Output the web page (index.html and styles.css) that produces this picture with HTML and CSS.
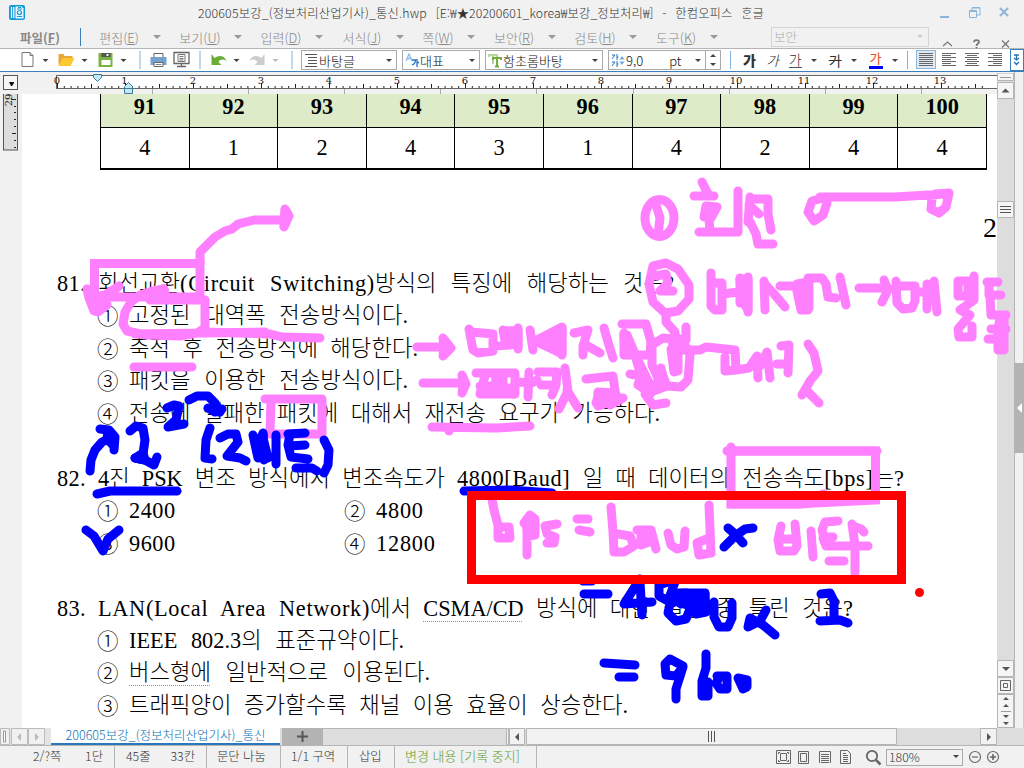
FILE: index.html
```html
<!DOCTYPE html>
<html lang="ko">
<head>
<meta charset="utf-8">
<title>한컴오피스 한글</title>
<link rel="stylesheet" href="styles.css">
</head>
<body>
<div class="app">
  <header class="titlebar">
    <svg class="logo" width="18" height="18" viewBox="0 0 18 18"><rect x="1" y="1" width="16" height="15" rx="2" fill="#149bd7"/><path d="M3.500 3v11M5.800 3v11" stroke="#fff" stroke-width="1.200"/><path d="M7.500 2.500h6l2 2v10h-8z" fill="#e9f6fc"/><path d="M9 5h5M10 3.500h3" stroke="#149bd7"/><circle cx="11.500" cy="8.500" r="2" fill="none" stroke="#149bd7" stroke-width="1.200"/><path d="M9 12.500h5" stroke="#149bd7"/></svg>
    <div class="title"><span class="fname">200605보강_(정보처리산업기사)_통신.hwp</span> <span>[E:₩★20200601_korea₩보강_정보처리₩]</span> <span>-</span> <span>한컴오피스</span> <span>ᄒᆞᆫ글</span></div>
    <svg class="winbtns" width="72" height="14" viewBox="0 0 72 14" fill="none" stroke="#8db4d9"><path d="M0 11h9" stroke-width="2"/><path d="M32 4V1.500h8V9h-3M29.500 4.500h7v7h-7zM29 5.500h8M32 2h8"/><path d="M60 2l8 8M68 2l-8 8" stroke-width="2"/></svg>
  </header>
  <nav class="menubar">
    <span class="mi file">파일(<u>F</u>)</span><i class="bluesep"></i>
    <span class="mi">편집(<u>E</u>)</span><i class="dn"></i>
    <span class="mi">보기(<u>U</u>)</span><i class="dn"></i>
    <span class="mi">입력(<u>D</u>)</span><i class="dn"></i>
    <span class="mi">서식(<u>J</u>)</span><i class="dn"></i>
    <span class="mi narrow">쪽(<u>W</u>)</span><i class="dn"></i>
    <span class="mi">보안(<u>R</u>)</span><i class="dn"></i>
    <span class="mi">검토(<u>H</u>)</span><i class="dn"></i>
    <span class="mi">도구(<u>K</u>)</span><i class="dn last"></i>
    <div class="search"><span>보안</span><i class="dn pale"></i></div>
    <svg class="menuend" width="70" height="12" viewBox="0 0 70 12" fill="none" stroke="#777" stroke-width="1.300"><path d="M1 8l4.500-4 4.500 4"/><path d="M32 4.300C32 1.500 37 1.500 37 4c0 1.600-2.500 1.500-2.500 4M34.500 9v1.500" stroke-width="1.800"/><path d="M60 2.500l7 7M67 2.500l-7 7"/></svg>
  </nav>
  <div class="toolbar">
    <svg class="icons" width="300" height="22" viewBox="0 0 300 22">
      <path d="M21.500 3.500h8l3 3v11h-11zM29.500 3.500v3h3" fill="#fff" stroke="#777"/>
      <path d="M58 5h5l1 2h8v4h-9l-5 5z" fill="#e9a63b"/><path d="M62 9h12l-4 8H58z" fill="#fdc82f"/>
      <path d="M98 4h14v14H98z" fill="#7ab342"/><path d="M101 4h9v4h-9z" fill="#555"/><path d="M106 5h2v2h-2z" fill="#fff"/><path d="M101 11h9v5h-9z" fill="#fff"/>
      <path d="M153.500 4.500h9v4h-9z" fill="#fff" stroke="#666"/><path d="M150 8h16v8h-16z" fill="#75a1cf"/><path d="M153.500 13.500h9v4h-9z" fill="#fff" stroke="#666"/><path d="M155 15.500h6" stroke="#888"/>
      <path d="M173.500 3.500h15v11h-15zM176.500 17.500h9M181 15v3" fill="none" stroke="#666" stroke-width="1.300"/><path d="M177.500 5.500h7v7h-7zM179 7.500h4M179 9.500h4M179 11h4" fill="#fff" stroke="#777"/>
      <path d="M211 5v11h10l-3-3c2-3 5-3 8-1-2-6-8-6-12-3z" fill="#6cad35"/>
      <path d="M264 5v11h-10l3-3c-2-3-5-3-8-1 2-6 8-6 12-3z" fill="#ccc"/>
      <path d="M42 10h6l-3 3zM81 10h6l-3 3zM120 10h6l-3 3zM233 10h6l-3 3z" fill="#444"/><path d="M272 10h6l-3 3z" fill="#bbb"/>
      <path d="M139.500 2v18M199.500 2v18M291.500 2v18" stroke="#82b2de"/>
    </svg>
    <div class="combo c1"><svg width="14" height="15" viewBox="0 0 14 15" stroke="#555"><path d="M1 1.500h12M4 4.500h9M4 7.500h9M4 10.500h9M1 13.500h12"/></svg><span>바탕글</span><i class="dn dark"></i></div>
    <div class="combo c2"><svg width="14" height="15" viewBox="0 0 14 15" fill="none"><path d="M1 8l3-7 3 7M2 5.500h4" stroke="#8eb8e8" stroke-width="1.300"/><path d="M7 7h3.500c0 3-1 4-3.500 5M12 6v8M12 9.500h2" stroke="#2671c5" stroke-width="1.300"/></svg><span>대표</span><i class="dn dark"></i></div>
    <div class="combo c3"><svg width="14" height="15" viewBox="0 0 14 15" fill="none"><path d="M1 4V2h8v2M5 2v9" stroke="#b9d79d" stroke-width="2"/><path d="M5 7V5h8v2M9 5v8M7 13.500h4" stroke="#73ac3b" stroke-width="2"/></svg><span>함초롬바탕</span><i class="dn dark"></i></div>
    <div class="combo c4"><svg width="14" height="15" viewBox="0 0 14 15" fill="none" stroke="#2671c5"><path d="M1 2h3L1 6M6 1v6M6 4h1.500M1 9h3l-3 4M6 8v6M6 11h1.500"/><path d="M8.500 6.500L11 3l2.500 3.500zM8.500 8.500L11 12l2.500-3.500z" fill="#6ea6df" stroke="none"/></svg><span class="size">9,0</span><span class="pt">pt</span><i class="dn dark"></i></div>
    <div class="spin"><i class="up"></i><i class="dn dark"></i></div>
    <i class="bluesep"></i>
    <div class="fmt"><b>가</b><em>가</em><span class="ul">가</span><i class="dn dark"></i><s>가</s><i class="dn dark"></i><span class="fc">가</span><i class="dn dark"></i></div>
    <i class="bluesep"></i>
    <svg class="align" width="88" height="22" viewBox="0 0 88 22"><rect x=".5" y="1.500" width="19" height="18" fill="#dfeaf5" stroke="#8db4d9"/><path d="M3 4.500h14M3 6.500h14M3 8.500h14M3 10.500h14M3 12.500h14M3 14.500h14M3 16.500h14M26 4.500h14M26 6.500h9M26 8.500h14M26 10.500h9M26 12.500h14M26 14.500h9M26 16.500h14M49 4.500h14M51 6.500h10M49 8.500h14M51 10.500h10M49 12.500h14M51 14.500h10M49 16.500h14M72 4.500h14M77 6.500h9M72 8.500h14M77 10.500h9M72 12.500h14M77 14.500h9M72 16.500h14" stroke="#666"/></svg>
    <div class="more"><svg width="8" height="14" viewBox="0 0 8 14" fill="none" stroke="#2470b6" stroke-width="1.300"><path d="M1 2h5M3.500 2v4M1 5l2.500 2L6 5M1 9l2.500 2.500L6 9"/></svg></div>
  </div>
  <div class="workspace">
    <div class="main">
      <svg class="hruler" width="997" height="22" viewBox="0 0 997 22">
        <defs><pattern id="ticks" x="57" y="0" width="68" height="22" patternUnits="userSpaceOnUse"><path d="M.5 11v5M7.300 14v2M14.100 14v2M20.900 14v2M27.700 14v2M34.500 12v4M41.300 14v2M48.100 14v2M54.900 14v2M61.700 14v2" stroke="#222"/></pattern></defs>
        <rect x="56.500" y="3.500" width="950" height="13" fill="#fff" stroke="#666"/>
        <rect x="57" y="4" width="930" height="13" fill="url(#ticks)"/>
        <path d="M152.500 17v5M248.500 17v5M344.500 17v5M440.500 17v5M536.500 17v5M633.500 17v5M729.500 17v5M825.500 17v5M921.500 17v5" stroke="#aaa"/>
        <g class="rnum"><text x="57" y="12">0</text><text x="124.500" y="12">1</text><text x="193" y="12">2</text><text x="261" y="12">3</text><text x="329" y="12">4</text><text x="397" y="12">5</text><text x="465" y="12">6</text><text x="533" y="12">7</text><text x="601" y="12">8</text><text x="669" y="12">9</text><text x="736" y="12">10</text><text x="804" y="12">11</text><text x="872" y="12">12</text><text x="940" y="12">13</text></g>
        <path d="M93.500 2.500h8v3l-4 4-4-4z" fill="#bfeaf5" stroke="#3b7c99"/><path d="M124.500 21.500v-7l4-4 4 4v7zM124 16.500h9" fill="#bfeaf5" stroke="#3b7c99"/>
        <rect x="3.500" y="3.500" width="14" height="14" fill="#f7f7f7" stroke="#555"/><path d="M9 10h5v1l-2 3h-1z" fill="#111"/>
      </svg>
      <div class="docrow">
        <div class="vruler"><svg width="22" height="62" viewBox="0 0 22 62"><rect x="3.500" y="-1" width="14" height="57" fill="#ddd" stroke="#555"/><path d="M11 5.500h5M14 12.500h2M14 18.500h2M14 25.500h2M14 32.500h2M12 39.500h4M14 46.500h2M14 53.500h2" stroke="#222"/><text class="vnum" transform="translate(12 6) rotate(-90)">29</text></svg></div>
        <div class="page">
          <table class="answers">
            <tr><th>91</th><th>92</th><th>93</th><th>94</th><th>95</th><th>96</th><th>97</th><th>98</th><th>99</th><th>100</th></tr>
            <tr><td>4</td><td>1</td><td>2</td><td>4</td><td>3</td><td>1</td><td>4</td><td>2</td><td>4</td><td>4</td></tr>
          </table>
          <div class="pageno">2</div>
          <section class="q">
            <div class="line"><span class="n">81.</span><p class="w574">회선교환<span class="la">(Circuit Switching)</span>방식의 특징에 해당하는 것은?</p></div>
            <div class="line opt"><span class="o">①</span><p class="w279">고정된 대역폭 전송방식이다.</p></div>
            <div class="line opt"><span class="o">②</span><p class="w289">축적 후 전송방식에 해당한다.</p></div>
            <div class="line opt"><span class="o">③</span><p class="w279">패킷을 이용한 전송방식이다.</p></div>
            <div class="line opt"><span class="o">④</span><p class="w531">전송에 실패한 패킷에 대해서 재전송 요구가 가능하다.</p></div>
          </section>
          <section class="q">
            <div class="line"><span class="n">82.</span><p class="w806">4진 <span class="sp">PSK</span> 변조 방식에서 변조속도가 <span class="la">4800[Baud]</span> 일 때 데이터의 전송속도<span class="la">[bps]</span>는?</p></div>
            <div class="line opt"><span class="o">①</span><p class="w216">2400</p><span class="o">②</span><p class="num">4800</p></div>
            <div class="line opt"><span class="o">③</span><p class="w216">9600</p><span class="o">④</span><p class="num">12800</p></div>
          </section>
          <section class="q">
            <div class="line"><span class="n">83.</span><p class="w755"><span class="la">LAN(Local Area Network)</span>에서 <span class="sp">CSMA/CD</span> 방식에 대한 설명 중 틀린 것은?</p></div>
            <div class="line opt"><span class="o">①</span><p class="w275">IEEE 802.3의 표준규약이다.</p></div>
            <div class="line opt"><span class="o">②</span><p class="w301"><span class="sp">버스형에</span> 일반적으로 이용된다.</p></div>
            <div class="line opt"><span class="o">③</span><p class="w499">트래픽양이 증가할수록 채널 이용 효율이 상승한다.</p></div>
          </section>
        </div>
      </div>
    </div>
    <div class="vscroll">
      <svg width="17" height="655" viewBox="0 0 17 655">
        <rect width="17" height="655" fill="#ddd"/>
        <g fill="#f5f5f5" stroke="#b5b5b5"><path d="M.5 0h16v7.500H.5zM.5 9.500h16v16H.5zM.5 128.500h16v16H.5zM.5 587.500h16v16H.5zM.5 604.500h16v16H.5zM.5 621.500h16v33H.5z"/></g>
        <path d="M3 4.500h11M4 638.500h10" stroke="#999"/><path d="M3 133.500h11M3 136.500h11M3 139.500h11" stroke="#555"/>
        <path d="M4.500 19.500h8l-4-4zM5 594h8l-4 4zM6 627h6l-3-3zM6 634h6l-3-3zM6 642h6l-3 3zM6 649h6l-3 3z" fill="#555"/>
        <path d="M3.500 607.500h10v10h-10zM6.500 610.500h4v4h-4z" fill="none" stroke="#666"/>
      </svg>
    </div>
    <div class="sidepane"><div class="handle"><svg width="7" height="10" viewBox="0 0 7 10"><path d="M6 0v10L1 5z" fill="#fff"/></svg></div></div>
  </div>
  <div class="tabbar">
    <svg class="tabnav" width="51" height="17" viewBox="0 0 51 17"><rect width="51" height="17" fill="#e4e4e4"/><path d="M.5.500h9v16H.5zM11.500.500h16v16h-16zM28.500.500h16v16h-16z" fill="#f1f1f1" stroke="#bbb"/><path d="M3.500 3h2v11h-2z" fill="#fff" stroke="#999"/><path d="M21 5v8l-4-4zM35 5v8l4-4z" fill="#bbb"/></svg>
    <div class="tab"><span>200605보강_(정보처리산업기사)_통신</span></div>
    <div class="addtab"><svg width="11" height="11" viewBox="0 0 11 11"><path d="M5.500 0v11M0 5.500h11" stroke="#555" stroke-width="2"/></svg></div>
    <div class="trough"></div>
    <svg class="hscroll" width="509" height="17" viewBox="0 0 509 17"><rect width="509" height="17" fill="#ddd"/><path d="M.5.500h2v16h-2zM3.500.500h15v16h-15zM20.500.500h370v16h-370zM474.500.500h16v16h-16z" fill="#f2f2f2" stroke="#b5b5b5"/><path d="M13 5v8l-4-4zM481 5v8l4-4z" fill="#555"/><path d="M202.500 3v11M205.500 3v11M208.500 3v11" stroke="#555"/></svg>
  </div>
  <footer class="status">
    <div class="st s1"><span>2/?쪽</span><span>1단</span></div>
    <div class="st s2"><span>45줄</span><span>33칸</span></div>
    <div class="st s3"><span>문단 나눔</span></div>
    <div class="st s4"><span>1/1 구역</span></div>
    <div class="st s5"><span>삽입</span></div>
    <div class="st s6"><span>변경 내용 [기록 중지]</span></div>
    <svg class="views" width="108" height="20" viewBox="0 0 108 20" fill="none" stroke="#666"><path d="M.5 3.500h14v13H.5zM4.500 6.500h6v7h-6z"/><path d="M2.500 7V5.500H4M11 5.500h1.500V7M2.500 13v1.500H4M11 14.500h1.500V13"/><path d="M22.500 4.500h10v12h-10zM24.500 6.500h6v8h-6z"/><path d="M43.500 16V4.500h11V16M45 7.500h8M45 9.500h8M45 11.500h8M45 13.500h8M45 15.500h8"/><path d="M64.500 3.500h7l3 3v10h-10zM67 6.500h3M67 8.500h5M67 10.500h5M67 12.500h5M67 14.500h5"/><circle cx="96" cy="9" r="5.200" stroke-width="1.800"/><path d="M100 13l4.500 4.500" stroke-width="2.500"/></svg>
    <div class="zoom"><span>180%</span><i class="dn dark"></i></div>
    <svg class="pm" width="34" height="14" viewBox="0 0 34 14" fill="none" stroke="#666" stroke-width="1.200"><circle cx="8" cy="7" r="5.500"/><path d="M5 7h6"/><circle cx="26" cy="7" r="5.500"/><path d="M23 7h6M26 4v6" stroke-width="1.600"/></svg>
  </footer>

  <svg class="ink" width="1024" height="768" viewBox="0 0 1024 768">
    <g class="pink">
      <path class="square" d="M94.500 296V263.500H200V297H94.500"/>
      <path d="M200 264V252L205 247 215 237 225 231 232 229 238 224 246 222 254 220H285M285 209L289 216 284 227"/>
      <path class="fill" d="M87 289L89 298 94 311 98 312 107 305 104 299 119 286 105 295 95 297 87 289"/>
      <path d="M164 289L150 292 140 295 131 302 125 312 123 324 127 331 145 335 180 336 197 333 205 328V300H150M204 332L270 334 282 337 320 338M135 334L265 332"/>
      <path class="fill" d="M140 296L150 292 164 289 166 298z"/>
      <path d="M134 367H192M265 399H322V434H270L271 400M432 427L496 428 530 426M449 431V429"/>
      <path d="M417 347H448M423 383H465"/>
      <path class="fill" d="M443 338L451 348 443 356 444 347zM462 375L466 384 462 393 463 384zM285 210L288 217 284 226 284 219z"/>
      <path d="M469 329L473 350 478 353 493 351 493 334 471 332M494 346L510 345M503 330L505 341M518 328V349M504 331H516"/>
      <path class="fill" d="M504 331H518V346L506 342z"/>
      <path d="M530 330L533 350M535 341L562 327V355M537 342L557 351M552 338V346M574 333L588 330 583 346V355M584 344L600 353M604 328L608 342 613 358"/>
      <path class="fill" d="M562 328V354L538 342z"/>
      <path d="M622 324H646L651 342M624 333V355H650L651 340M627 335L635 354 643 371 651 387M630 374L641 376 638 385 651 393"/>
      <path class="fill" d="M635 355L650 385 651 393 640 386 641 376zM624 334L632 350 625 353z"/>
      <path d="M666 314V322L675 332 674 345 677 352M686 327V340L663 338 652 345 652 365 660 382M686 347L690 355 688 380 681 387 667 386 645 394 653 405 666 403M671 349L674 372 678 371V354M661 368L663 383 650 391"/>
      <path class="fill" d="M671 338H678V352L675 351zM661 370L666 384 656 387z"/>
      <path d="M675 350H700L706 347 735 350 736 370 725 371V357M736 370L749 368 757 356 758 378M760 366L767 352 770 378M781 346L789 345 788 373M777 364H788"/>
      <path d="M808 344L814 353 818 371 810 381 802 395M807 391L819 403"/>
      <path d="M476 373H515V394H480L485 376M496 376V393M517 382L532 383 537 380M529 372L528 397M538 372H557L556 385 552 395M541 385H554M565 368L568 391 559 409M567 390L578 408"/>
      <path class="fill" d="M496 376H503V392H484L480 386 496 386zM500 388H514V394z"/>
      <path d="M586 379L613 376 616 398 596 403 599 393 612 398 610 405 623 398"/>
      <path class="fill" d="M598 392L614 393 620 399 598 406z"/>
      <ellipse cx="659.500" cy="218" rx="14.500" ry="18.500"/>
      <path d="M656 205L660 218 658 235M702 182L706 190 709 195M694 196H714M717 207L706 206 704 217 711 218 717 207M709 220L710 230M699 232H738V191"/>
      <path d="M750 197L748 222M749 205L759 214M755 199H768L768 214 771 230M750 222L756 234 758 244H773"/>
      <path d="M823 198L812 201 808 212 814 221 823 215 827 203M820 197H895L945 194M932 198L931 209 939 213 946 207 949 193 935 194"/>
      <path d="M666 263L653 266 649 284 653 302 665 313 678 311 689 299 689 285 678 269 666 263M656 276L666 274 668 283 660 291H673"/>
      <path d="M711 273V306L715 310H722V283H711M723 294L738 292M740 278V303M748 277V312"/>
      <path d="M764 281L765 310M764 283L775 295 785 307M780 286H796L801 310H808V278H822L826 284 828 297 836 298M840 277L846 305"/>
      <path d="M859 288H888M884 280L888 290 882 302M896 281L897 303 903 309 912 308 915 301V286H896M915 292H927M927 284V309M934 281L937 312"/>
      <path class="fill" d="M740 279H748V310L742 300zM797 284L809 282V308H801z"/>
      <path d="M958 281V296L968 296V281L958 281M974 276V300L960 310 970 315 958 329 959 337H972V326"/>
      <path d="M987 282H998M989 283V295H1001M990 295L991 315H1006M991 329H1006M988 339H1003"/><path class="fill" d="M1000 318H1004V350H998V330z"/>
      <path class="square" d="M731 447V504H800L815 503 875.500 500V451H731"/>
      <path d="M727 451H877M823 494H824M731 504L800 504"/>
      <path d="M492 499L494 510 498 525 498 538H510L509 527H500M524 523L530 515 535 519 535 535 528 536 526 524M527 530V555M557 524L545 526 547 534 555 537 554 543H547"/>
      <path d="M577 519H588M579 530L590 532M611 507L613 532 614 552H624L634 546 630 536 618 534M637 530H651L656 549M641 533V545L649 542 650 534M668 533L671 545 677 549 684 547 685 531M709 505L711 553 699 555 697 543 709 538"/>
      <path d="M781 526L778 540 780 551H794L797 546 795 524M781 539H796M811 531L813 557M838 521L825 522 822 530 824 537H833M823 538L826 546H868M829 561H844M852 524L855 545V573M853 526L861 529 864 532"/>
    </g>
    <g class="blue">
      <path d="M90 471L91 460 95 450 102 442 113 437M100 429L109 430 115 437 114 450M130 431L136 426 143 428 145 440 143 454M135 458L145 460 154 465 157 457"/>
      <path class="fill" d="M108 431L114 438 113 445 107 439zM135 458L143 453 145 460z"/>
      <path d="M167 408L174 405 179 406 176 420 168 427 184 424M189 400L197 396H208L215 403 220 412"/>
      <path class="fill" d="M208 408L215 412 222 409 219 412z"/>
      <path d="M210 428L206 440 205 458 212 459M220 438L228 434H236L238 442 227 456 240 458 246 461M253 435L258 458M263 433L264 460M257 445H263M263 438L268 458M276 435V464"/>
      <path class="fill" d="M263 434L265 459 254 437 256 446z"/>
      <path d="M288 434L305 433M290 434L288 445 291 457 308 459M289 446L305 445M296 468H312L317 471M324 440L329 450 328 465 324 473"/>
      <path d="M97 494L110 491H177M86 530L94 536 103 551 108 539 119 530M464 491L510 490 552 493"/>
      <path d="M728 528L735 534 743 543M724 547L735 536 745 529 753 528"/>
      <path d="M583 581H592M584 594H608M640 579L624 604 652 602M640 582L642 615M671 581L659 585 659 596 668 601 675 582"/>
      <path d="M686 593L672 594 681 604 691 598 705 594M690 609L686 619 676 621 668 613 670 604 681 598M703 594L695 601 697 613 705 610 703 594M714 602L714 617 719 627 728 627 732 618V603"/>
      <path class="fill" d="M678 593H705L706 612 696 614 690 606 678 602z"/>
      <path d="M766 610L760 621 748 627 750 618 763 625 775 635M821 594L830 593 834 601V620M820 621L840 620 848 623"/>
      <path d="M604 663L635 665M619 677H634M683 666L670 659 665 664 666 675 676 676 683 667 676 689V699M706 654V668L702 681V696H708V682L704 687M717 676H727V689H720L716 683 719 678M738 678L747 680V687L743 689 738 678"/>
    </g>
    <rect class="frame" x="471.500" y="495.500" width="430" height="84"/>
    <circle cx="919.500" cy="592.500" r="4.500" fill="#f00"/>
  </svg>
</div>
</body>
</html>
```
FILE: styles.css
```css
* { box-sizing: border-box; }
body { margin: 0; background: #f1f1f1; }
.app {
  position: relative;
  width: 1024px;
  height: 768px;
  overflow: hidden;
  display: flex;
  flex-direction: column;
  font: 300 12.500px "Noto Sans CJK KR", sans-serif;
  color: #333;
  white-space: nowrap;
}
svg { display: block; flex: none; }
i { font-style: normal; flex: none; }

.titlebar { height: 26px; display: flex; align-items: center; padding-left: 8px; }
.title { width: 566px; margin-left: 172px; display: flex; justify-content: space-between; font-size: 12.300px; line-height: 20px; letter-spacing: .1px; }
.title .fname { letter-spacing: .2px; }
.winbtns { margin-left: 176px; }

.menubar { height: 23px; display: flex; align-items: center; padding-left: 20px; color: #888; border-bottom: 1px solid #b5b5b5; }
.mi { width: 42px; flex: none; text-align: center; font-size: 13px; }
.mi.narrow { width: 32px; }
.mi.file { font-weight: 700; width: 40px; font-size: 12.500px; }
.menubar .bluesep { flex: none; margin: 0 17px 0 20px; height: 18px; background: #3a80bf; }
.menubar .dn { margin: 0 18px 0 13px; }
.menubar .dn.last { margin-right: 0; }
.dn { width: 0; height: 0; border: 4px solid transparent; border-top-color: #999; border-bottom: 0; }
.dn.dark { border-width: 3px; border-top-color: #444; border-bottom: 0; }
.menubar .dn.pale { border-width: 3px; border-top-color: #ccc; border-bottom: 0; margin: 0; }
.up { width: 0; height: 0; border: 3px solid transparent; border-bottom-color: #444; border-top: 0; }
.bluesep { width: 1px; height: 18px; background: #82b2de; }
.search { width: 158px; flex: none; height: 20px; border: 1px solid #d5d5d5; display: flex; justify-content: space-between; align-items: center; padding: 0 5px 2px 2px; color: #aaa; margin-left: auto; font-size: 12.500px; }
.menuend { margin: 14px 12px 0 13px; }

.toolbar { height: 23px; background: #fff; border-bottom: 1px solid #3a80bf; display: flex; align-items: center; }
.toolbar > * { flex: none; }
.icons { width: 301px; }
.combo { height: 20px; border: 1px solid #aaa; display: flex; align-items: center; padding: 0 4px 0 2px; color: #111; font-size: 13px; }
.combo span { margin-left: 1px; }
.combo .dn { margin-left: auto; }
.c1 { width: 96px; }
.c2 { width: 78px; margin-left: 5px; }
.c3 { width: 118px; margin-left: 5px; }
.c4 { width: 98px; margin-left: 5px; }
.c4 .pt { margin-left: 26px; }
.spin { width: 15px; height: 20px; border: 1px solid #aaa; border-left: 0; display: flex; flex-direction: column; justify-content: space-around; align-items: center; }
.toolbar > .bluesep { margin-left: 9px; }
.fmt { width: 167px; display: flex; align-items: center; padding-left: 12px; color: #333; font-size: 14px; line-height: 18px; }
.fmt b { font-weight: 900; margin-right: 10px; }
.fmt em { margin-right: 10px; font-style: oblique; }
.fmt .ul { border-bottom: 1px solid #555; height: 16px; line-height: 15px; }
.fmt .dn { margin: 0 12px 0 9px; }
.fmt s { font-weight: 400; }
.fmt .fc { color: #e8481c; border-bottom: 3px solid #00f; height: 18px; line-height: 14px; font-weight: 400; font-size: 13px; padding: 0 1px; }
.fmt .dn:last-child { margin-right: 0; }
.align { margin-left: 8px; }
.more { margin-left: auto; width: 14px; height: 22px; border: 1px solid #3a80bf; display: flex; align-items: center; justify-content: center; }

.workspace { height: 656px; display: flex; }
.main { width: 997px; display: flex; flex-direction: column; }
.rnum, .vnum { font: 10px "DejaVu Serif", serif; fill: #111; text-anchor: middle; }
.docrow { flex: 1; display: flex; min-height: 0; }
.vruler { width: 22px; flex: none; }
.page { width: 975px; background: #fff; overflow: hidden; color: #000; font: 300 22.300px "Liberation Serif", "Noto Sans CJK KR", serif; }
.answers { border-collapse: collapse; table-layout: fixed; width: 887px; margin-left: 78px; border-bottom: 2px solid #000; }
.answers th, .answers td { border: 1px solid #000; padding: 0; text-align: center; }
.answers th { border-top: 0; background: #deebc8; height: 33px; line-height: 25px; vertical-align: top; }
.answers td { height: 41px; line-height: 40px; }
.pageno { margin: 41px 0 0 961px; font-size: 28px; line-height: 34px; height: 34px; }
.q { margin: 0 0 32.460px 35px; }
.pageno + .q { margin-top: 23.500px; }
.line { height: 32.460px; line-height: 32.460px; display: flex; }
.line p { margin: 0; white-space: normal; text-align-last: justify; height: 32.460px; }
.n { width: 41px; letter-spacing: .4px; }
.opt { padding-left: 40px; }
.o { width: 32px; line-height: 30px; font-family: "Noto Sans CJK KR", sans-serif; font-size: 21.500px; }
.la { letter-spacing: .7px; }
.sp { text-decoration: underline dotted #e07a20 1px; text-underline-offset: 5px; }
.w574 { width: 576px; } .w279 { width: 279px; } .w289 { width: 289px; } .w531 { width: 531px; }
.w806 { width: 806px; } .w755 { width: 755px; } .w275 { width: 275px; } .w301 { width: 301px; }
.w499 { width: 499px; } .line .w216 { width: 215px; text-align-last: left; letter-spacing: .5px; }
.line .num { letter-spacing: .8px; }
.vscroll { width: 17px; padding-top: 1px; }
.sidepane { width: 10px; border-left: 1px solid #b5b5b5; border-right: 1px solid #ccc; padding-top: 291px; }
.handle { height: 90px; width: 9px; background: #b3b3b3; display: flex; align-items: center; justify-content: center; }

.tabbar { height: 17px; display: flex; background: #ddd; }
.tab { width: 229px; background: #fff; border-bottom: 2px solid #2a78bb; color: #0a6fb5; font-size: 12.500px; line-height: 13px; display: flex; justify-content: center; }
.addtab { width: 41px; margin-left: 2px; background: #b3b3b3; display: flex; align-items: center; justify-content: center; }
.trough { width: 183px; border-top: 1px solid #b5b5b5; }
.status { height: 23px; display: flex; align-items: center; border-top: 1px solid #b5b5b5; font-size: 12.300px; color: #333; }
.st { height: 22px; border-right: 1px solid #b5b5b5; display: flex; justify-content: space-between; align-items: center; }
.st span { line-height: 18px; margin-bottom: 2px; }
.s1 { width: 115px; padding: 0 11px 0 33px; }
.s2 { width: 92px; padding: 0 11px; }
.s3 { width: 74px; padding: 0 10px; }
.s4 { width: 67px; padding: 0 10px; }
.s5 { width: 47px; padding: 0 11px; }
.s6 { width: 142px; padding: 0 10px; color: #5d9a2c; font-size: 13px; }
.views { margin-left: 239px; }
.zoom { width: 77px; height: 17px; margin-left: 2px; border: 1px solid #aaa; display: flex; justify-content: space-between; align-items: center; padding: 0 3px 1px 2px; }
.pm { margin-left: 4px; }

.ink { position: absolute; left: 0; top: 0; fill: none; stroke-width: 9px; stroke-linecap: round; stroke-linejoin: round; }
.pink { stroke: #ff80ff; }
.blue { stroke: #00f; }
.pink .fill { fill: #ff80ff; }
.blue .fill { fill: #00f; }
.square { stroke-linejoin: miter; }
.frame { stroke: #f00; stroke-linejoin: miter; }
```
